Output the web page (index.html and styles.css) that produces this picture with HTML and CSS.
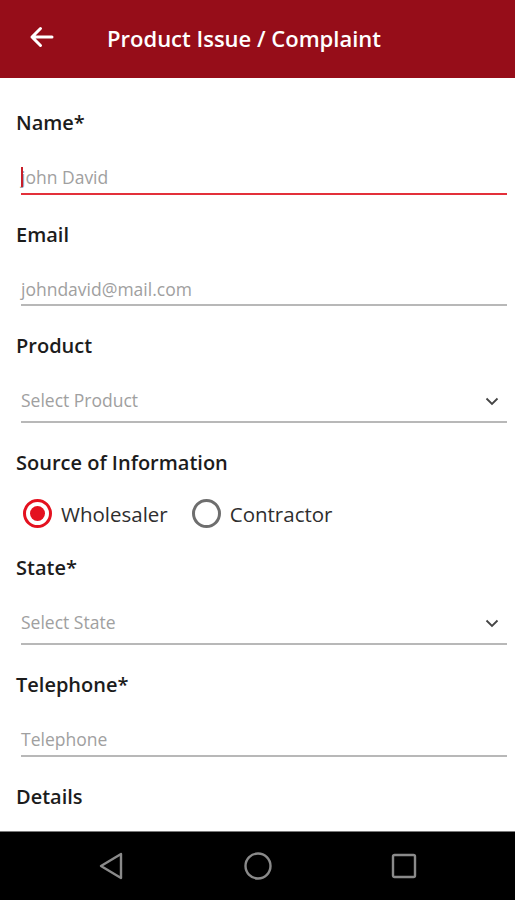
FILE: index.html
```html
<!DOCTYPE html>
<html>
<head>
<meta charset="utf-8">
<link rel="stylesheet" href="styles.css">
</head>
<body>
<div class="screen">
  <header class="appbar">
    <svg class="back" width="26" height="24" viewBox="0 0 26 24"><path d="M24 12H4M12.5 3.5 4 12l8.5 8.5" fill="none" stroke="#fff" stroke-width="3" stroke-linecap="round" stroke-linejoin="round"/></svg>
    <h1 class="title">Product Issue / Complaint</h1>
  </header>
  <main class="form">
    <div class="field">
      <div class="label">Name*</div>
      <div class="input focused"><span class="cursor"></span><span class="ph">john David</span></div>
    </div>
    <div class="field">
      <div class="label">Email</div>
      <div class="input"><span class="ph">johndavid@mail.com</span></div>
    </div>
    <div class="field">
      <div class="label">Product</div>
      <div class="select"><span class="ph">Select Product</span>
        <svg class="chev" width="14" height="9" viewBox="0 0 14 9"><path d="M1.5 1.5 7 7l5.5-5.5" fill="none" stroke="#444" stroke-width="1.8"/></svg>
      </div>
    </div>
    <div class="field">
      <div class="label">Source of Information</div>
      <div class="radios">
        <div class="radio on"><span class="ring"></span><span>Wholesaler</span></div>
        <div class="radio"><span class="ring"></span><span>Contractor</span></div>
      </div>
    </div>
    <div class="field">
      <div class="label">State*</div>
      <div class="select"><span class="ph">Select State</span>
        <svg class="chev" width="14" height="9" viewBox="0 0 14 9"><path d="M1.5 1.5 7 7l5.5-5.5" fill="none" stroke="#444" stroke-width="1.8"/></svg>
      </div>
    </div>
    <div class="field">
      <div class="label">Telephone*</div>
      <div class="input"><span class="ph">Telephone</span></div>
    </div>
    <div class="field">
      <div class="label">Details</div>
    </div>
  </main>
  <nav class="navbar">
    <svg width="26" height="30" viewBox="0 0 26 30"><path d="M23 3 3 15l20 12z" fill="none" stroke="#8a8a8a" stroke-width="2.4" stroke-linejoin="round"/></svg>
    <svg width="30" height="30" viewBox="0 0 30 30"><circle cx="15" cy="15" r="12.5" fill="none" stroke="#8a8a8a" stroke-width="2.4"/></svg>
    <svg width="26" height="26" viewBox="0 0 26 26"><rect x="2" y="2" width="22" height="22" rx="1.5" fill="none" stroke="#8a8a8a" stroke-width="2.4"/></svg>
  </nav>
</div>
</body>
</html>
```
FILE: styles.css
```css
* { box-sizing: border-box; }
html, body { margin: 0; padding: 0; }
body { font-family: "Open Sans", "Noto Sans", sans-serif; background: #fff; }
.screen { width: 515px; height: 900px; display: flex; flex-direction: column; overflow: hidden; }
.appbar { height: 78px; flex: none; background: #960d19; display: flex; align-items: center; padding: 0 0 0 28px; }
.back { display: block; margin-top: -4px; }
.title { margin: 0 0 0 53px; color: #fff; font-size: 22px; font-weight: 600; line-height: 28px; margin-top: -2px; }
.form { flex: 1; overflow: hidden; padding: 33px 8px 0 16px; }
.field { margin-bottom: 28px; }
.label { font-size: 20px; font-weight: 600; line-height: 24px; color: #1c1c1c; margin-bottom: 27px; }
.input, .select { position: relative; margin-left: 5px; border-bottom: 2px solid #b8b8b8; display: flex; align-items: flex-start; }
.input { height: 32.5px; padding-top: 4px; }
.select { height: 38px; padding-top: 4px; justify-content: space-between; }
.input.focused { border-bottom-color: #e3303a; }
.ph { font-size: 17.5px; line-height: 22px; color: #a0a0a0; }
.cursor { position: absolute; left: 0; top: 5px; width: 2px; height: 20px; background: #c81e28; }
.chev { margin: 8px 8px 0 0; }
.radios { display: flex; gap: 24px; margin-left: 7px; margin-top: -3px; }
.radio { display: flex; align-items: center; gap: 9px; font-size: 20.5px; color: #2e2e2e; line-height: 28px; }
.ring { width: 29px; height: 29px; border-radius: 50%; border: 3px solid #6e6e6e; display: flex; align-items: center; justify-content: center; }
.radio.on .ring { border-color: #e4111f; }
.radio.on .ring::after { content: ""; width: 15px; height: 15px; border-radius: 50%; background: #e4111f; }
.navbar { height: 69px; flex: none; background: #000; border-top: 1px solid #7a7a7a; display: flex; align-items: center; justify-content: space-between; padding: 0 98px 0 98px; }
```
